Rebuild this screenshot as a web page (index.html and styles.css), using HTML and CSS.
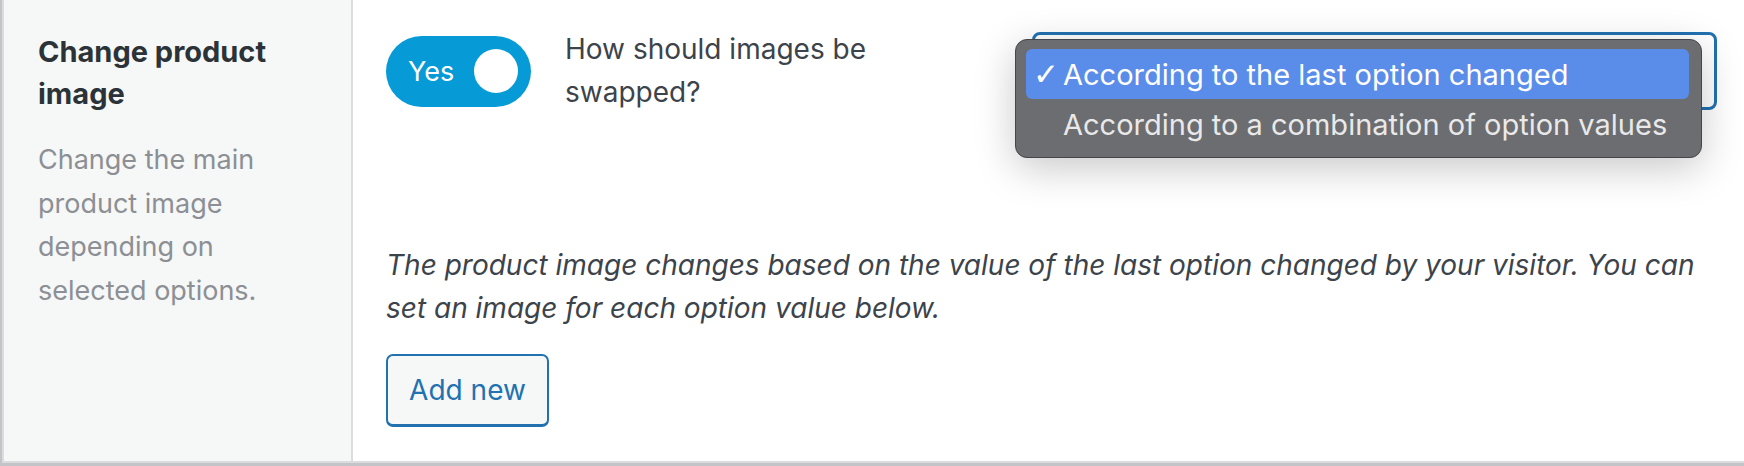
FILE: index.html
```html
<!DOCTYPE html>
<html lang="en">

<head>
  <meta charset="UTF-8">
  <title>Change product image</title>
  <link rel="stylesheet" href="styles.css">
</head>

<body>

  <div class="settings">
    <div class="row">

      <div class="row-head">
        <h3 class="row-title">Change product image</h3>
        <p class="row-desc">Change the main product image depending on selected options.</p>
      </div>

      <div class="row-body">
        <div class="control-line">
          <span class="toggle">
            <span class="toggle-text">Yes</span>
            <span class="toggle-knob"></span>
          </span>
          <span class="control-label">How should images be swapped?</span>

          <div class="select-wrap">
            <div class="select-box"></div>
            <ul class="select-menu">
              <li class="option selected"><span class="check">&#10003;</span>According to the last option changed</li>
              <li class="option"><span class="check"></span>According to a combination of option values</li>
            </ul>
          </div>
        </div>

        <p class="help">The product image changes based on the value of the last option changed by your visitor. You can set an image for each option value below.</p>

        <button class="btn">Add new</button>
      </div>

    </div>
  </div>

</body>

</html>
```

FILE: styles.css
```css
body {
  margin: 0;
  background-color: #ffffff;
  font-family: "Inter", "Noto Sans", sans-serif;
  color: #3c434a;
}

.settings {
  border-left: 2px solid #c3c4c7;
  border-bottom: 3px solid #c3c4c7;
  height: 466px;
  box-sizing: border-box;
}

.row {
  display: flex;
  height: 100%;
  border-left: 2px solid #dcdcde;
  border-bottom: 2px solid #dcdcde;
  box-sizing: border-box;
}

.row-head {
  width: 349px;
  flex-shrink: 0;
  box-sizing: border-box;
  padding: 31px 30px 0 34px;
  background-color: #f6f7f7;
  border-right: 2px solid #dcdcde;
}

.row-title {
  margin: 0;
  font-size: 29px;
  line-height: 42px;
  font-weight: 700;
  color: #2c3338;
}

.row-desc {
  margin: 23px 0 0;
  font-size: 27px;
  line-height: 43.5px;
  color: #8c8f94;
}

.row-body {
  flex: 1;
  padding: 28px 27px 0 33px;
}

.control-line {
  display: flex;
  align-items: center;
}

/* toggle */
.toggle {
  display: flex;
  align-items: center;
  justify-content: space-between;
  width: 145px;
  height: 71px;
  box-sizing: border-box;
  padding: 0 13px 0 22px;
  border-radius: 36px;
  background-color: #069ad6;
  flex-shrink: 0;
}

.toggle-text {
  color: #ffffff;
  font-size: 27px;
}

.toggle-knob {
  width: 44px;
  height: 44px;
  border-radius: 50%;
  background-color: #ffffff;
}

.control-label {
  width: 340px;
  margin-left: 34px;
  font-size: 28px;
  line-height: 43px;
}

/* select + open menu */
.select-wrap {
  position: relative;
  margin-left: auto;
}

.select-box {
  width: 685px;
  height: 78px;
  box-sizing: border-box;
  border: 3px solid #2271b1;
  border-radius: 8px;
  background-color: #ffffff;
}

.select-menu {
  position: absolute;
  left: -17px;
  top: 7px;
  width: 687px;
  margin: 0;
  padding: 9px 12px 8px 10px;
  box-sizing: border-box;
  list-style: none;
  background-color: #6c6d70;
  border: 1px solid #45464a;
  border-radius: 12px;
  box-shadow: 0 10px 40px rgba(0, 0, 0, 0.22);
}

.option {
  display: flex;
  align-items: center;
  height: 50px;
  border-radius: 6px;
  font-size: 29px;
  color: #e9e9ea;
}

.option.selected {
  background-color: #5a8de9;
  color: #ffffff;
}

.check {
  width: 30px;
  padding-left: 7px;
  font-family: "DejaVu Sans", sans-serif;
  font-size: 31px;
  font-weight: 700;
  line-height: 1;
}

.help {
  margin: 130px 0 0;
  font-size: 28px;
  line-height: 42.5px;
  font-style: italic;
}

.btn {
  display: block;
  margin-top: 25px;
  width: 163px;
  height: 73px;
  font-family: inherit;
  font-size: 28px;
  color: #2271b1;
  background-color: #f6f7f7;
  border: 2px solid #2271b1;
  border-bottom-width: 3px;
  border-radius: 7px;
  cursor: pointer;
}
```
